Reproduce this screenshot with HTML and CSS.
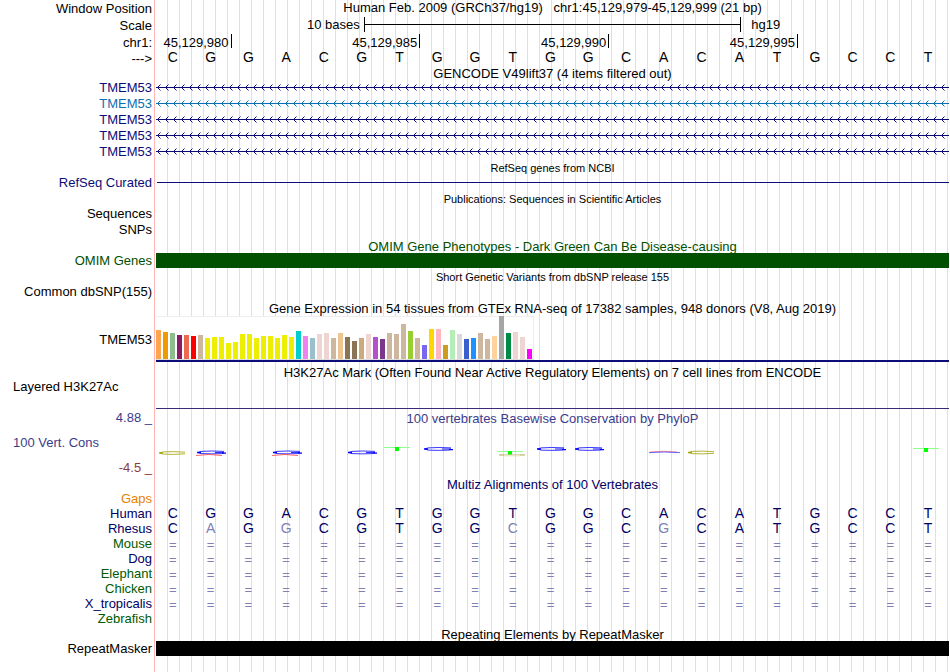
FILE: index.html
```html
<!DOCTYPE html>
<html lang="en">
<head>
<meta charset="utf-8">
<title>Genome tracks</title>
<link rel="stylesheet" href="styles.css">
</head>
<body>
<svg class="defs" width="0" height="0" aria-hidden="true">
  <defs>
    <pattern id="arrows" width="8" height="16" patternUnits="userSpaceOnUse">
      <path d="M0 7.5H8M4.5 4.5L1.5 7.5L4.5 10.5" fill="none" stroke="#0c0c78"/>
    </pattern>
    <pattern id="arrows-blue" width="8" height="16" patternUnits="userSpaceOnUse">
      <path d="M0 7.5H8M4.5 4.5L1.5 7.5L4.5 10.5" fill="none" stroke="#0c70b0"/>
    </pattern>
  </defs>
</svg>
<main class="tracks">
  <div class="row"><span class="label low">Window Position</span><h1 class="title">Human Feb. 2009 (GRCh37/hg19)&nbsp;&nbsp; chr1:45,129,979-45,129,999 (21 bp)</h1></div>
  <div class="row ruled"><span class="label low">Scale</span>
    <div class="scale"><span class="from">10 bases</span><span class="ruler"></span><span class="build">hg19</span></div></div>
  <div class="row mid"><span class="label low">chr1:</span>
    <div class="positions"><span class="first">45,129,980</span><span>45,129,985</span><span>45,129,990</span><span>45,129,995</span></div></div>
  <div class="row"><span class="label low">---&gt;</span><div class="seq bases" data-seq="CGGACGTGGTGGCACATGCCT"></div></div>

  <div class="row"><h2 class="title drop">GENCODE V49lift37 (4 items filtered out)</h2></div>
  <div class="row mid"><span class="label navy">TMEM53</span><svg class="gene"><rect width="100%" height="16" fill="url(#arrows)"/></svg></div>
  <div class="row mid"><span class="label blue">TMEM53</span><svg class="gene"><rect width="100%" height="16" fill="url(#arrows-blue)"/></svg></div>
  <div class="row mid"><span class="label navy">TMEM53</span><svg class="gene"><rect width="100%" height="16" fill="url(#arrows)"/></svg></div>
  <div class="row mid"><span class="label navy">TMEM53</span><svg class="gene"><rect width="100%" height="16" fill="url(#arrows)"/></svg></div>
  <div class="row mid"><span class="label navy">TMEM53</span><svg class="gene"><rect width="100%" height="16" fill="url(#arrows)"/></svg></div>

  <div class="row"><h2 class="title small drop">RefSeq genes from NCBI</h2></div>
  <div class="row"><span class="label even navy">RefSeq Curated</span><div class="thin"></div></div>

  <div class="row mid"><h2 class="title small drop">Publications: Sequences in Scientific Articles</h2></div>
  <div class="row mid"><span class="label">Sequences</span></div>
  <div class="row mid"><span class="label">SNPs</span></div>

  <div class="row"><h2 class="title green drop">OMIM Gene Phenotypes - Dark Green Can Be Disease-causing</h2></div>
  <div class="row"><span class="label even green">OMIM Genes</span><div class="bar omim"></div></div>

  <div class="row mid"><h2 class="title small drop">Short Genetic Variants from dbSNP release 155</h2></div>
  <div class="row mid"><span class="label">Common dbSNP(155)</span></div>

  <div class="row mid"><h2 class="title">Gene Expression in 54 tissues from GTEx RNA-seq of 17382 samples, 948 donors (V8, Aug 2019)</h2></div>
  <div class="row expression"><span class="label low">TMEM53</span><div class="gtex"><div class="bars" id="bars"></div></div></div>

  <div class="row tall"><h2 class="title drop">H3K27Ac Mark (Often Found Near Active Regulatory Elements) on 7 cell lines from ENCODE</h2></div>
  <div class="row layered"><span class="label left">Layered H3K27Ac</span><div class="baseline"></div></div>

  <div class="row cons">
    <div class="axis">
      <span class="label violet">4.88 _</span>
      <span class="label left violet">100 Vert. Cons</span>
      <span class="label maroon">-4.5 _</span>
    </div>
    <div class="logo">
      <h2 class="title violet">100 vertebrates Basewise Conservation by PhyloP</h2>
      <svg viewBox="156 440 793 20" preserveAspectRatio="none" role="img" aria-label="Conservation logo">
        <defs>
          <g id="g" fill="none" stroke="#0000ff">
            <path d="M28 .9Q15 .1 5 .9L2 2L5 3.1Q15 3.6 26 3.1L28 2H19" stroke-width=".8"/>
            <path d="M1 2H5M26 2.6H30" stroke-width="1.4"/>
          </g>
          <g id="c" fill="none" stroke="#a0a000">
            <path d="M27 1.2Q15 .2 5 .9L2 2L5 3.1Q15 3.8 27 2.8" stroke-width=".8"/>
            <path d="M1 2H5" stroke-width="1.4"/>
          </g>
          <path id="under" d="M0 1.5Q13 -.5 26 1.5" fill="none" stroke="#ff4040" stroke-width=".8"/>
          <g id="t"><path d="M0 .5H26" stroke="#90ff90"/><path d="M11 0H15V4H11Z" fill="#00ff00"/></g>
        </defs>
        <use href="#c" x="158" y="451"/>
        <use href="#g" x="196" y="450.5"/><use href="#under" x="196" y="454"/>
        <use href="#g" x="272" y="450.5"/><use href="#under" x="272" y="454"/>
        <use href="#g" x="347" y="450.5"/>
        <use href="#t" x="384" y="447"/>
        <use href="#g" x="423" y="447"/>
        <use href="#t" x="497" y="451"/>
        <path d="M499 455H504M520 455H525" stroke="#b0b050" stroke-width="1.2"/><path d="M500 454.5H524M504 455.8H520" stroke="#c8c880" stroke-width=".6"/>
        <use href="#g" x="536" y="447"/>
        <use href="#g" x="574" y="447"/>
        <path d="M650 452Q664 450.5 677 452" fill="none" stroke="#ff7070" stroke-width=".8"/><path d="M649 452.6Q664 451.4 680 452.6" fill="none" stroke="#4040ff" stroke-width=".8"/>
        <use href="#c" x="687" y="450.5"/>
        <use href="#t" x="913" y="448"/>
      </svg>
    </div>
  </div>

  <div class="row"><h2 class="title ink">Multiz Alignments of 100 Vertebrates</h2></div>
  <div class="row"><span class="label orange">Gaps</span></div>
  <div class="row"><span class="label ink">Human</span><div class="seq ink" data-seq="CGGACGTGGTGGCACATGCCT"></div></div>
  <div class="row"><span class="label ink">Rhesus</span><div class="seq ink" data-seq="CaGgCGTGGcGGCgCATGCCT"></div></div>
  <div class="row"><span class="label leaf">Mouse</span><div class="seq gap" data-seq="====================="></div></div>
  <div class="row"><span class="label ink">Dog</span><div class="seq gap" data-seq="====================="></div></div>
  <div class="row"><span class="label leaf">Elephant</span><div class="seq gap" data-seq="====================="></div></div>
  <div class="row"><span class="label leaf">Chicken</span><div class="seq gap" data-seq="====================="></div></div>
  <div class="row"><span class="label ink">X_tropicalis</span><div class="seq gap" data-seq="====================="></div></div>
  <div class="row"><span class="label leaf">Zebrafish</span></div>

  <div class="row short"><h2 class="title">Repeating Elements by RepeatMasker</h2></div>
  <div class="row"><span class="label even">RepeatMasker</span><div class="bar"></div></div>
</main>
<script src="tracks.js"></script>
</body>
</html>
```
FILE: styles.css
```css
* { box-sizing: border-box; }

body {
  margin: 0;
  background: #fff;
  color: #000;
  font: 13px/15px "Liberation Sans", Arial, Helvetica, sans-serif;
}

.defs { display: block; }

.tracks {
  min-height: 100vh;
  padding-right: 1px;
  background:
    linear-gradient(to right, #fff 154px, #ffb4b4 154px, #ffb4b4 155px, #fff 155px, #fff 156px, transparent 156px),
    linear-gradient(to right, #dcdcff 1px, transparent 1px) 11px 0 / 12px 100%;
}

.row {
  display: grid;
  grid-template-columns: 156px minmax(0, 1fr);
  grid-template-rows: 100%;
  align-items: center;
  height: 15px;
}
.row.short { height: 14px; }
.row.mid { height: 16px; }
.row.tall { height: 18px; }
.row.ruled { height: 19px; }

.label {
  grid-column: 1;
  padding: 0 4px 2px 0;
  text-align: right;
  white-space: nowrap;
}
.label.left { padding-left: 13px; text-align: left; }
.label.low { padding: 1px 4px 0 0; }
.label.even { padding-bottom: 0; }

.title {
  grid-column: 2;
  margin: 0;
  font-size: 13px;
  font-weight: 400;
  text-align: center;
  white-space: nowrap;
}
.title.small { font-size: 11px; }
.title.drop { padding-top: 2px; }

.navy { color: #0c0c78; }
.blue { color: #0c70b0; }
.green { color: #005000; }
.violet { color: #3c3c8c; }
.maroon { color: #8c3c3c; }
.ink { color: #000064; }
.leaf { color: #005a00; }
.orange { color: #e68200; }

.scale {
  display: grid;
  grid-template-columns: 1fr 47.6% 1fr;
  align-items: center;
}
.from { padding-right: 4px; text-align: right; }
.build { padding-left: 10px; }
.ruler {
  height: 15px;
  border: solid #000;
  border-width: 0 1px;
  background: linear-gradient(#000, #000) 0 7px / 100% 1px no-repeat;
}

.positions {
  display: grid;
  grid-template-columns: 2fr 5fr 5fr 5fr 4fr;
  align-self: start;
}
.positions span {
  height: 14px;
  padding: 1px 2px 0 0;
  border-right: 1px solid #000;
  text-align: right;
}

.seq {
  display: grid;
  grid-template-columns: repeat(21, minmax(0, 1fr));
  margin: 0 2px 0 -2px;
  padding-bottom: 2px;
  font-size: 14px;
  text-align: center;
}
.seq.bases { padding-bottom: 0; }
.seq .mismatch, .seq.gap { color: #8080b4; }
.seq.gap { padding-bottom: 0; font-size: 13px; }

.gene { display: block; width: 100%; height: 16px; }
.thin { height: 1px; margin-left: 1px; background: #0c0c78; }
.bar { height: 15px; background: #000; }
.bar.omim { background: #005000; }

.expression { height: 46px; }
.gtex { height: 46px; border-bottom: 2px solid #0c0c78; }
.bars {
  display: flex;
  align-items: flex-end;
  gap: 2px;
  width: 378px;
  height: 44px;
  border-bottom: 1px solid #ddd;
  background: #fff;
  box-shadow: inset 0 1px #eee, inset -1px 0 #eee;
}
.bars i { width: 5px; }

.layered { height: 29px; align-items: start; }
.layered .label { line-height: 13px; }
.baseline { align-self: end; height: 1px; background: #3c2878; }

.cons { height: 68px; align-items: start; }
.axis { display: grid; gap: 8px; padding-top: 1px; }
.logo { padding-top: 2px; }
.logo svg { display: block; width: 100%; height: 20px; margin-top: 14px; }
```
FILE: tracks.js
```js
// One cell per base; lower-case letters mark bases that differ from the reference genome.
document.querySelectorAll(".seq").forEach(function (row) {
  row.dataset.seq.split("").forEach(function (base) {
    var cell = document.createElement("span");
    cell.textContent = base.toUpperCase();
    if (base !== base.toUpperCase()) cell.className = "mismatch";
    row.appendChild(cell);
  });
});

// Median expression per tissue: colour and bar height.
var tissues = [
  ["#ffa54f", 29], ["#ee9a00", 27], ["#8fbc8f", 26], ["#8b1c62", 24], ["#ee6a50", 24], ["#ff0000", 23],
  ["#cdb79e", 24], ["#eeee00", 21], ["#eeee00", 22], ["#eeee00", 22], ["#eeee00", 16], ["#eeee00", 17],
  ["#eeee00", 25], ["#eeee00", 25], ["#eeee00", 21], ["#eeee00", 23], ["#eeee00", 23], ["#eeee00", 21],
  ["#eeee00", 24], ["#eeee00", 22], ["#00cdcd", 28], ["#ee82ee", 23], ["#9ac0cd", 21], ["#eed5d2", 25],
  ["#eed5d2", 26], ["#cdb79e", 21], ["#eec591", 26], ["#8b7355", 22], ["#8b7355", 18], ["#cdaa7d", 21],
  ["#eed5d2", 25], ["#b452cd", 22], ["#7a378b", 20], ["#cdb79e", 26], ["#cdb79e", 25], ["#cdb79e", 35],
  ["#9acd32", 28], ["#cdb79e", 21], ["#7a67ee", 14], ["#ffd700", 30], ["#ffb6c1", 30], ["#cd9b1d", 14],
  ["#b4eeb4", 29], ["#d9d9d9", 25], ["#3a5fcd", 20], ["#1e90ff", 21], ["#cdb79e", 26], ["#cdb79e", 20],
  ["#ffd39b", 23], ["#a6a6a6", 43], ["#008b45", 26], ["#eed5d2", 27], ["#eed5d2", 22], ["#ff00ff", 10]
];
var bars = document.getElementById("bars");
tissues.forEach(function (tissue) {
  var bar = document.createElement("i");
  bar.style.background = tissue[0];
  bar.style.height = tissue[1] + "px";
  bars.appendChild(bar);
});
```
